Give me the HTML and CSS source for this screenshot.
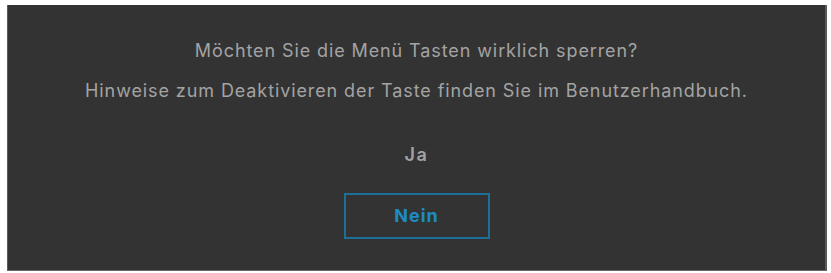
FILE: index.html
```html
<!DOCTYPE html>
<html lang="de">
<head>
    <meta charset="UTF-8">
    <meta name="viewport" content="width=device-width, initial-scale=1.0">
    <title>Menü sperren</title>
    <link rel="stylesheet" href="styles.css">
</head>
<body>
    <div class="osd-dialog">
        <p class="osd-message">Möchten Sie die Menü Tasten wirklich sperren?</p>
        <p class="osd-message">Hinweise zum Deaktivieren der Taste finden Sie im Benutzerhandbuch.</p>

        <div class="osd-options">
            <div class="osd-option">Ja</div>
            <div class="osd-option selected">Nein</div>
        </div>
    </div>
</body>
</html>
```

FILE: styles.css
```css
body {
    margin: 0;
    padding: 0;
    background: #ffffff;
    font-family: Inter, "Liberation Sans", sans-serif;
}

.osd-dialog {
    margin: 5px 4px 2px 7px;
    height: 266px;
    box-sizing: border-box;
    padding-top: 26px;
    background: #333333;
    border-left: 1px solid #5a5a5a;
    border-right: 2px solid #5a5a5a;
    border-bottom: 1px solid #6a6a6a;
    display: flex;
    flex-direction: column;
    align-items: center;
}

.osd-message {
    margin: 0;
    font-size: 18px;
    line-height: 40px;
    letter-spacing: 0.9px;
    color: #a3a3a3;
}

.osd-options {
    margin-top: 24px;
    display: flex;
    flex-direction: column;
    align-items: center;
    gap: 18px;
}

.osd-option {
    width: 146px;
    height: 40px;
    line-height: 40px;
    text-align: center;
    font-size: 18px;
    font-weight: 600;
    letter-spacing: 1.5px;
    color: #a3a3a3;
}

.osd-option.selected {
    height: 46px;
    line-height: 42px;
    box-sizing: border-box;
    border: 2px solid #1b6f98;
    color: #1d8bc6;
    font-weight: bold;
    letter-spacing: 1px;
}
```
